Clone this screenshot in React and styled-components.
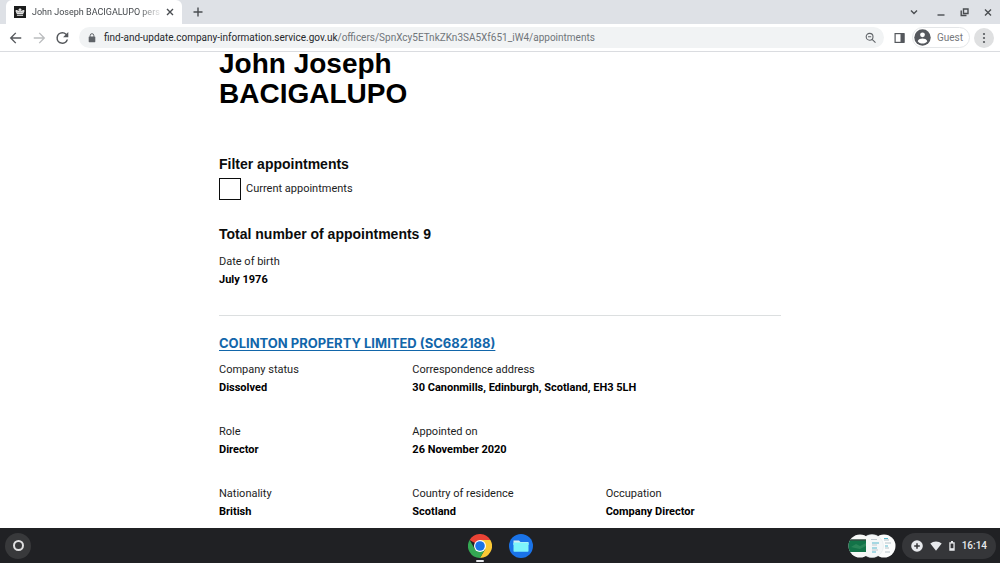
import React from 'react';
import styled, { createGlobalStyle, css } from 'styled-components';

const GlobalStyle = createGlobalStyle`
  * {
    box-sizing: border-box;
  }
  body {
    margin: 0;
    background: #ffffff;
  }
  button {
    padding: 0;
    border: 0;
    background: none;
    font: inherit;
    color: inherit;
  }
`;

const Screen = styled.div`
  display: flex;
  flex-direction: column;
  height: 100vh;
  overflow: hidden;
`;

//Browser

const TabStrip = styled.div`
  display: flex;
  align-items: center;
  flex: none;
  height: 24px;
  padding-left: 6px;
  padding-right: 6px;
  background: #dee1e6;
  font-family: Roboto, sans-serif;
`;

const Tab = styled.div`
  display: flex;
  align-items: center;
  width: 176px;
  height: 24px;
  padding: 0 6px 0 8px;
  border-radius: 6px 6px 0 0;
  background: #ffffff;
`;

const TabTitle = styled.span`
  flex: 1;
  margin-left: 6px;
  overflow: hidden;
  white-space: nowrap;
  font-size: 9px;
  line-height: 14px;
  color: #45494d;
  mask-image: linear-gradient(to right, #000 80%, transparent);
`;

const IconButton = styled.button`
  display: flex;
  align-items: center;
  justify-content: center;
  flex: none;
  width: ${props => props.$size || 12}px;
  height: ${props => props.$size || 12}px;
  border-radius: 50%;
  background: ${props => props.$filled ? '#dfe0e1' : 'transparent'};
`;

const NewTab = styled.div`
  flex: 1;
  padding-left: 10px;
`;

const WindowButtons = styled.div`
  display: flex;
  align-items: center;
  gap: 12px;
`;

const Toolbar = styled.div`
  display: flex;
  align-items: center;
  flex: none;
  height: 28px;
  padding: 0 6px 0 9px;
  border-bottom: 1px solid #dadce0;
  background: #ffffff;
  font-family: Roboto, sans-serif;
`;

const NavButtons = styled.div`
  display: flex;
  gap: 9px;
  margin-right: 10px;
`;

const AddressBar = styled.div`
  display: flex;
  align-items: center;
  flex: 1;
  height: 21px;
  padding: 0 7px;
  border-radius: 11px;
  background: #f1f3f4;
`;

const Address = styled.div`
  flex: 1;
  margin-left: 6px;
  font-size: 10px;
  line-height: 16px;
  color: #70757a;
  white-space: nowrap;
`;

const Host = styled.span`
  color: #26282b;
`;

const ToolbarActions = styled.div`
  display: flex;
  align-items: center;
  gap: 4px;
  margin-left: 8px;
`;

const Profile = styled.button`
  display: flex;
  align-items: center;
  gap: 6px;
  height: 21px;
  padding: 0 6px 0 1px;
  border: 1px solid #e4e6e8;
  border-radius: 11px;
  font-size: 10px;
  color: #77797c;
`;

//Page

const Viewport = styled.main`
  flex: 1;
  min-height: 0;
  margin-top: -3px;
  overflow: hidden;
`;

const Content = styled.div`
  max-width: 562px;
  margin: 0 auto;
  font-family: Roboto, 'Noto Sans', sans-serif;
  color: #0b0c0c;
`;

const Title = styled.h1`
  max-width: 375px;
  margin: 0 0 45px;
  font-family: 'Liberation Sans', Arial, sans-serif;
  font-size: 28px;
  line-height: 30px;
  color: #000000;
`;

const SubHeading = styled.h2`
  margin: 0 0 ${props => props.$gap}px;
  font-family: 'Liberation Sans', Arial, sans-serif;
  font-size: 14px;
  line-height: 20px;
`;

const FilterRow = styled.div`
  display: flex;
  align-items: center;
  gap: 5px;
  margin-bottom: 24px;
`;

const Checkbox = styled.input`
  appearance: none;
  width: 22px;
  height: 22px;
  margin: 0;
  border: 1px solid #0b0c0c;
  background: #ffffff;
`;

const labelText = css`
  font-size: 11px;
  line-height: 18px;
  color: #1c1d1d;
`;

const FilterLabel = styled.label`
  ${labelText}
`;

const Details = styled.dl`
  display: grid;
  grid-template-columns: repeat(3, 1fr);
  gap: 26px 18px;
  margin: 0;
`;

const Detail = styled.div`
  grid-column-end: span ${props => props.$span || 1};
`;

const Term = styled.dt`
  ${labelText}
`;

const Value = styled.dd`
  margin: 0;
  font-size: 11px;
  font-weight: 700;
  line-height: 18px;
  color: #000000;
`;

const Divider = styled.hr`
  margin: 26px 0 16px;
  border: 0;
  border-top: 1px solid #dcdfe0;
`;

const CompanyHeading = styled.h2`
  margin: 0 0 7px;
  font-family: Inter, sans-serif;
  font-size: 13px;
  line-height: 22px;
`;

const CompanyLink = styled.a`
  color: #1266aa;
  text-decoration: underline;
  text-underline-offset: 2px;
`;

//Shelf

const Shelf = styled.footer`
  display: grid;
  grid-template-columns: 1fr auto 1fr;
  align-items: center;
  flex: none;
  height: 35px;
  padding: 0 4px 0 5px;
  background: #202124;
  font-family: Roboto, sans-serif;
`;

const Launcher = styled.button`
  display: flex;
  align-items: center;
  justify-content: center;
  width: 26px;
  height: 26px;
  border-radius: 50%;
  background: #38393b;
`;

const LauncherRing = styled.span`
  width: 11px;
  height: 11px;
  border: 2px solid #e0e0e1;
  border-radius: 50%;
`;

const Apps = styled.div`
  display: flex;
  gap: 17px;
`;

const AppButton = styled.button`
  position: relative;
  display: flex;
`;

const RunningMark = styled.span`
  position: absolute;
  bottom: -4px;
  left: 8px;
  width: 8px;
  height: 2px;
  border-radius: 1px;
  background: #e8eaed;
`;

const Tray = styled.div`
  display: flex;
  align-items: center;
  justify-content: flex-end;
  gap: 6px;
`;

const Status = styled.button`
  display: flex;
  align-items: center;
  gap: 7px;
  height: 26px;
  padding: 0 9px;
  border-radius: 13px;
  background: #353639;
  font-size: 10px;
  font-weight: 500;
  color: #e8eaed;
`;

const Crown = () => (
  <svg width="12" height="12" viewBox="0 0 12 12">
    <rect width="12" height="12" fill="#1b1c1c" />
    <path d="M1.500 4.800c0-1.100 1.600-1.200 2.500-.4l1.200.4V3.900H4.600V2.900h.8v-.6h1.200v.6h.8v1h-.6v.9L8 4.400c.9-.8 2.500-.7 2.500.4 0 1.200-1 1.900-1.400 3.400H2.900C2.500 6.700 1.500 6 1.500 4.800z" fill="#e4e4e4" />
    <path d="M3.400 5.800l.8.900M6 5.600v1.300M8.600 5.800l-.8.900" stroke="#1b1c1c" strokeWidth=".6" />
    <path d="M2.900 9.400h6.200" stroke="#e4e4e4" strokeWidth=".9" />
  </svg>
);

const Stroke = ({ size = 12, d, color = '#4a4d51', width = 1.4 }) => (
  <svg width={size} height={size} viewBox="0 0 12 12" fill="none" stroke={color} strokeWidth={width}>
    <path d={d} />
  </svg>
);

const Reload = () => (
  <svg width="14" height="14" viewBox="4 4 16 16" fill="#55585c">
    <path d="M17.650 6.350A7.960 7.960 0 0 0 12 4a8 8 0 1 0 7.730 10h-2.080A6 6 0 1 1 12 6c1.660 0 3.140.690 4.220 1.780L13 11h7V4l-2.350 2.350z" transform="translate(2.200 1.800) scale(.85)" />
  </svg>
);

const Lock = () => (
  <svg width="12" height="12" viewBox="0 0 12 12">
    <rect x="2.700" y="4.500" width="6.600" height="5.700" rx=".6" fill="#5f6368" />
    <path d="M4.200 4.800V3.500a1.800 1.800 0 0 1 3.600 0v1.300" fill="none" stroke="#5f6368" strokeWidth="1" />
  </svg>
);

const ZoomOut = () => (
  <svg width="12" height="12" viewBox="0 0 12 12" fill="none" stroke="#606468" strokeWidth="1.100">
    <circle cx="4.600" cy="4.800" r="3.400" />
    <path d="M7.100 7.300l3.400 3.400M3 4.800h3.200" />
  </svg>
);

const SidePanel = () => (
  <svg width="12" height="12" viewBox="0 0 12 12">
    <rect x="1.100" y="1.600" width="8.800" height="8.800" fill="none" stroke="#55585d" strokeWidth="1.200" />
    <path d="M6.500 1.500h4v9h-4z" fill="#55585d" />
  </svg>
);

const Person = () => (
  <svg width="17" height="17" viewBox="0 0 17 17">
    <circle cx="8.500" cy="8.500" r="8.200" fill="#55585d" />
    <circle cx="8.500" cy="5.800" r="2.400" fill="#fff" />
    <path d="M3.700 12.300c.4-2 3.200-2.700 4.800-2.700s4.400.7 4.800 2.700c-1 1.400-2.900 2.300-4.800 2.300s-3.800-.9-4.800-2.300z" fill="#fff" />
  </svg>
);

const Dots = () => (
  <svg width="12" height="12" viewBox="0 0 12 12" fill="#55585c">
    <circle cx="6" cy="2" r="1.100" />
    <circle cx="6" cy="6" r="1.100" />
    <circle cx="6" cy="10" r="1.100" />
  </svg>
);

const ChromeIcon = () => (
  <svg width="24" height="24" viewBox="0 0 24 24">
    <path d="M12 12L1.600 6A12 12 0 0 1 22.400 6z" fill="#ea4335" />
    <path d="M12 12V6h10.400A12 12 0 0 1 12 24l5.200-9z" fill="#fbc935" />
    <path d="M12 12l5.200 3L12 24A12 12 0 0 1 1.600 6l5.200 9z" fill="#34a853" />
    <circle cx="12" cy="12" r="6" fill="#fff" />
    <circle cx="12" cy="12" r="4.800" fill="#1a73e8" />
  </svg>
);

const FilesIcon = () => (
  <svg width="24" height="24" viewBox="0 0 24 24">
    <circle cx="12" cy="12" r="12" fill="#1a73e8" />
    <path d="M4.500 6.500H10l1.500 1.500H19.500v3h-15z" fill="#d4eef2" />
    <rect x="4.500" y="8.400" width="15" height="9.400" rx=".8" fill="#7df4fb" />
  </svg>
);

const RecentFiles = () => (
  <svg width="48" height="24" viewBox="0 0 48 24">
    <defs>
      <clipPath id="first"><circle cx="12" cy="12" r="11.500" /></clipPath>
    </defs>
    <circle cx="36" cy="12" r="11.500" fill="#fbfcfc" />
    <path d="M36 6h5M37 9h6M37 14h4M37 18h5" stroke="#b4c2c9" strokeWidth="1" />
    <path d="M36 4.500h4M37 12h3" stroke="#56b8cd" strokeWidth="1" />
    <circle cx="24" cy="12" r="11.500" fill="#f4f7f8" stroke="#dfe6e9" strokeWidth=".5" />
    <path d="M24 9h7M24 14h5M24 18h4" stroke="#56b8cd" strokeWidth="1" />
    <path d="M23 5.500h6M24 11h5M24 16h6" stroke="#bdc8ce" strokeWidth="1" />
    <g clipPath="url(#first)">
      <rect width="24" height="24" fill="#f7f8f7" />
      <rect y="6" width="18" height="12" fill="#137348" />
      <path d="M0 6h18" stroke="#334d41" strokeWidth="1.500" />
      <path d="M3 13l5-3 4 2 6-3v3l-6 3-5-1z" fill="#2a8558" />
    </g>
  </svg>
);

const PlusBadge = () => (
  <svg width="12" height="12" viewBox="0 0 12 12">
    <circle cx="6" cy="6" r="5.800" fill="#e8eaed" />
    <path d="M6 3.200v5.600M3.200 6h5.600" stroke="#353639" strokeWidth="1.500" />
  </svg>
);

const Wifi = () => (
  <svg width="12" height="12" viewBox="0 0 12 12">
    <path d="M.3 3.600a8.500 8.500 0 0 1 11.400 0L6 10.700z" fill="#e8eaed" />
  </svg>
);

const Battery = () => (
  <svg width="6" height="12" viewBox="0 0 6 12">
    <path d="M2 1h2v1.200h1.700v8.600H.3V2.200H2z" fill="#e8eaed" />
    <path d="M1.600 3.600h2.800v4.600H1.600z" fill="#353639" />
  </svg>
);

const details = [
  { term: 'Company status', value: 'Dissolved' },
  { term: 'Correspondence address', value: '30 Canonmills, Edinburgh, Scotland, EH3 5LH', span: 2 },
  { term: 'Role', value: 'Director' },
  { term: 'Appointed on', value: '26 November 2020', span: 2 },
  { term: 'Nationality', value: 'British' },
  { term: 'Country of residence', value: 'Scotland' },
  { term: 'Occupation', value: 'Company Director' },
];

const Browser = () => (
  <header>
    <TabStrip>
      <Tab>
        <Crown />
        <TabTitle>John Joseph BACIGALUPO pers</TabTitle>
        <IconButton aria-label="Close tab"><Stroke d="M3 3l6 6M9 3l-6 6" /></IconButton>
      </Tab>
      <NewTab>
        <IconButton aria-label="New tab"><Stroke d="M6 1.500v9M1.500 6h9" /></IconButton>
      </NewTab>
      <WindowButtons>
        <IconButton $size={16} aria-label="Search tabs"><Stroke d="M3 4.500l3 3 3-3" /></IconButton>
        <IconButton aria-label="Minimise"><Stroke d="M3.500 9h7" /></IconButton>
        <IconButton aria-label="Restore"><Stroke d="M5.500 3h4.500v4.500H5.500zM3.200 4.500v5h5.300" /></IconButton>
        <IconButton aria-label="Close window"><Stroke d="M3 3.500l6 6M9 3.500l-6 6" /></IconButton>
      </WindowButtons>
    </TabStrip>
    <Toolbar>
      <NavButtons>
        <IconButton $size={14} aria-label="Back"><Stroke size={14} width={1.200} color="#55585c" d="M10.500 6h-9M5.800 1.600L1.500 6l4.300 4.400" /></IconButton>
        <IconButton $size={14} aria-label="Forward"><Stroke size={14} width={1.200} color="#bbbdbf" d="M1.500 6h9M6.200 1.600L10.500 6l-4.300 4.400" /></IconButton>
        <IconButton $size={14} aria-label="Reload"><Reload /></IconButton>
      </NavButtons>
      <AddressBar>
        <Lock />
        <Address>
          <Host>find-and-update.company-information.service.gov.uk</Host>/officers/SpnXcy5ETnkZKn3SA5Xf651_iW4/appointments
        </Address>
        <IconButton aria-label="Zoom"><ZoomOut /></IconButton>
      </AddressBar>
      <ToolbarActions>
        <IconButton $size={16} aria-label="Side panel"><SidePanel /></IconButton>
        <Profile><Person />Guest</Profile>
        <IconButton $size={20} $filled aria-label="Menu"><Dots /></IconButton>
      </ToolbarActions>
    </Toolbar>
  </header>
);

const Appointments = () => (
  <Viewport>
    <Content>
      <Title>John Joseph<br />BACIGALUPO</Title>
      <SubHeading $gap={4}>Filter appointments</SubHeading>
      <FilterRow>
        <Checkbox type="checkbox" id="current" />
        <FilterLabel htmlFor="current">Current appointments</FilterLabel>
      </FilterRow>
      <SubHeading $gap={9}>Total number of appointments 9</SubHeading>
      <Details>
        <Detail>
          <Term>Date of birth</Term>
          <Value>July 1976</Value>
        </Detail>
      </Details>
      <Divider />
      <CompanyHeading>
        <CompanyLink href="#company">COLINTON PROPERTY LIMITED (SC682188)</CompanyLink>
      </CompanyHeading>
      <Details>
        {details.map(item => (
          <Detail key={item.term} $span={item.span}>
            <Term>{item.term}</Term>
            <Value>{item.value}</Value>
          </Detail>
        ))}
      </Details>
    </Content>
  </Viewport>
);

const App = () => (
  <Screen>
    <GlobalStyle />
    <Browser />
    <Appointments />
    <Shelf>
      <Launcher aria-label="Launcher"><LauncherRing /></Launcher>
      <Apps>
        <AppButton aria-label="Chrome"><ChromeIcon /><RunningMark /></AppButton>
        <AppButton aria-label="Files"><FilesIcon /></AppButton>
      </Apps>
      <Tray>
        <RecentFiles />
        <Status><PlusBadge /><Wifi /><Battery />16:14</Status>
      </Tray>
    </Shelf>
  </Screen>
);

export default App;
